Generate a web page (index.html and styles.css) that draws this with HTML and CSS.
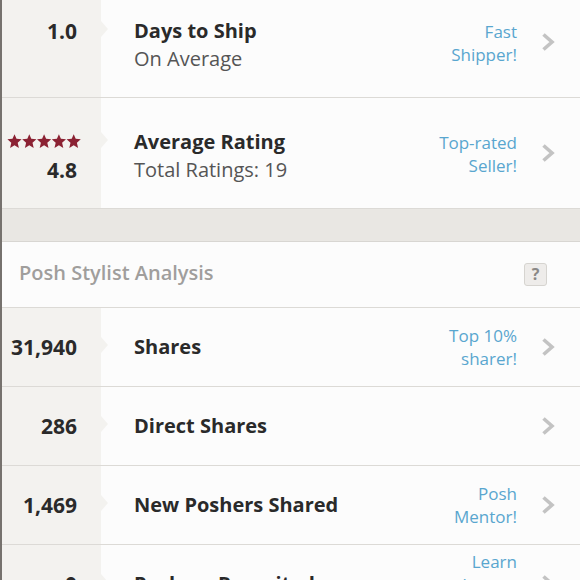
FILE: index.html
```html
<!DOCTYPE html>
<html lang="en">
<head>
    <meta charset="UTF-8">
    <meta name="viewport" content="width=device-width, initial-scale=1.0">
    <title>Closet Stats</title>
    <link rel="stylesheet" href="styles.css">
</head>
<body>

<div class="stats">

    <div class="row tall">
        <div class="metric"><div class="value">1.0</div></div>
        <div class="info">
            <div class="label">
                <div class="title">Days to Ship</div>
                <div class="sub">On Average</div>
            </div>
            <div class="badge">Fast<br>Shipper!</div>
            <svg class="chevron" width="14" height="20" viewBox="0 0 14 20"><polyline points="2.5,2.5 11,10 2.5,17.5" /></svg>
        </div>
    </div>

    <div class="row tall">
        <div class="metric">
            <svg class="stars" width="75" height="15" viewBox="0 0 75 15">
                <path d="M7.5 0.2 L9.5 4.8 L14.6 5.3 L10.7 8.7 L11.9 13.9 L7.5 11.2 L3.1 13.9 L4.3 8.7 L0.4 5.3 L5.5 4.8 Z" />
                <path transform="translate(14.8 0)" d="M7.5 0.2 L9.5 4.8 L14.6 5.3 L10.7 8.7 L11.9 13.9 L7.5 11.2 L3.1 13.9 L4.3 8.7 L0.4 5.3 L5.5 4.8 Z" />
                <path transform="translate(29.6 0)" d="M7.5 0.2 L9.5 4.8 L14.6 5.3 L10.7 8.7 L11.9 13.9 L7.5 11.2 L3.1 13.9 L4.3 8.7 L0.4 5.3 L5.5 4.8 Z" />
                <path transform="translate(44.4 0)" d="M7.5 0.2 L9.5 4.8 L14.6 5.3 L10.7 8.7 L11.9 13.9 L7.5 11.2 L3.1 13.9 L4.3 8.7 L0.4 5.3 L5.5 4.8 Z" />
                <path transform="translate(59.2 0)" d="M7.5 0.2 L9.5 4.8 L14.6 5.3 L10.7 8.7 L11.9 13.9 L7.5 11.2 L3.1 13.9 L4.3 8.7 L0.4 5.3 L5.5 4.8 Z" />
            </svg>
            <div class="value">4.8</div>
        </div>
        <div class="info">
            <div class="label">
                <div class="title">Average Rating</div>
                <div class="sub">Total Ratings: 19</div>
            </div>
            <div class="badge">Top-rated<br>Seller!</div>
            <svg class="chevron" width="14" height="20" viewBox="0 0 14 20"><polyline points="2.5,2.5 11,10 2.5,17.5" /></svg>
        </div>
    </div>

    <div class="band"></div>

    <div class="section-head">
        <span>Posh Stylist Analysis</span>
        <span class="help">?</span>
    </div>

    <div class="row">
        <div class="metric"><div class="value">31,940</div></div>
        <div class="info">
            <div class="label"><div class="title">Shares</div></div>
            <div class="badge">Top 10%<br>sharer!</div>
            <svg class="chevron" width="14" height="20" viewBox="0 0 14 20"><polyline points="2.5,2.5 11,10 2.5,17.5" /></svg>
        </div>
    </div>

    <div class="row">
        <div class="metric"><div class="value">286</div></div>
        <div class="info">
            <div class="label"><div class="title">Direct Shares</div></div>
            <div class="badge"></div>
            <svg class="chevron" width="14" height="20" viewBox="0 0 14 20"><polyline points="2.5,2.5 11,10 2.5,17.5" /></svg>
        </div>
    </div>

    <div class="row">
        <div class="metric"><div class="value">1,469</div></div>
        <div class="info">
            <div class="label"><div class="title">New Poshers Shared</div></div>
            <div class="badge">Posh<br>Mentor!</div>
            <svg class="chevron" width="14" height="20" viewBox="0 0 14 20"><polyline points="2.5,2.5 11,10 2.5,17.5" /></svg>
        </div>
    </div>

    <div class="row">
        <div class="metric"><div class="value">0</div></div>
        <div class="info">
            <div class="label"><div class="title">Poshers Recruited</div></div>
            <div class="badge">Learn<br>how to<br>recruit!</div>
            <svg class="chevron" width="14" height="20" viewBox="0 0 14 20"><polyline points="2.5,2.5 11,10 2.5,17.5" /></svg>
        </div>
    </div>

</div>

</body>
</html>
```

FILE: styles.css
```css
body {
    margin: 0;
    background: #fcfcfc;
    font-family: "Open Sans", Lato, sans-serif;
    color: #2a2a2a;
    overflow: hidden;
}
.stats {
    border-left: 2px solid #76726e;
    margin-top: -13px; /* first row is cut off at the top */
}
.row {
    display: flex;
    border-bottom: 1px solid #dcdad6;
}
.metric {
    width: 99px;
    flex: none;
    box-sizing: border-box;
    padding: 25px 24px 25px 0;
    background: #f3f2ef;
    text-align: right;
    line-height: 28px;
    font-size: 21px;
    font-weight: 700;
}
.row.tall .metric {
    padding: 30px 24px 24px 0;
}
.stars {
    display: block;
    margin: 6px -5px 7px auto;
    fill: #8b2233;
}
.info {
    flex: 1;
    display: flex;
    align-items: flex-start;
    padding: 0 25px 0 33px;
}
.label {
    flex: 1;
    padding: 25px 0;
    line-height: 28px;
}
.row.tall .label {
    padding: 30px 0 24px;
}
.title {
    position: relative;
    font-size: 20px;
    font-weight: 700;
}
/* little notch from the grey value column */
.title::before {
    content: "";
    position: absolute;
    left: -33px;
    top: 4px;
    border-left: 7px solid #f3f2ef;
    border-top: 8px solid transparent;
    border-bottom: 8px solid transparent;
}
.sub {
    font-size: 20px;
    color: #555;
}
.badge {
    align-self: center;
    text-align: right;
    font-size: 17px;
    line-height: 23px;
    color: #59a6cf;
}
.row.tall .badge {
    margin-top: 2px;
}
.chevron {
    align-self: center;
    margin-left: 24px;
    fill: none;
    stroke: #c3c3c3;
    stroke-width: 3.6;
}
.band {
    height: 32px;
    background: #e9e7e3;
    border-bottom: 1px solid #d8d6d2;
}
.section-head {
    display: flex;
    align-items: center;
    justify-content: space-between;
    height: 61px;
    padding: 0 33px 4px 17px;
    border-bottom: 1px solid #dcdad6;
    font-size: 20px;
    font-weight: 600;
    color: #a09e9c;
}
.help {
    width: 21px;
    height: 21px;
    line-height: 21px;
    margin-top: 4px;
    text-align: center;
    border: 1px solid #d6d4d0;
    border-radius: 3px;
    background: #eeecea;
    font-size: 16px;
    font-weight: 700;
    color: #8a8886;
}
```
